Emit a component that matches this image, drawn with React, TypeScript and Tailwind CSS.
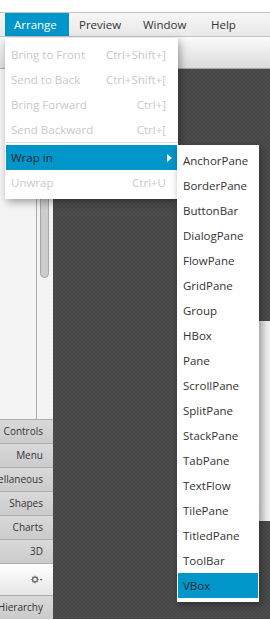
import React from "react";

// Scene Builder style window with the Arrange > Wrap in menu open

const arrangeItems = [
  { label: "Bring to Front", key: "Ctrl+Shift+]" },
  { label: "Send to Back", key: "Ctrl+Shift+[" },
  { label: "Bring Forward", key: "Ctrl+]" },
  { label: "Send Backward", key: "Ctrl+[" },
];

const wrapTargets = [
  "AnchorPane",
  "BorderPane",
  "ButtonBar",
  "DialogPane",
  "FlowPane",
  "GridPane",
  "Group",
  "HBox",
  "Pane",
  "ScrollPane",
  "SplitPane",
  "StackPane",
  "TabPane",
  "TextFlow",
  "TilePane",
  "TitledPane",
  "ToolBar",
  "VBox",
];

const sections = ["Controls", "Menu", "Miscellaneous", "Shapes", "Charts", "3D"];

function MenuBar() {
  return (
    <div className="flex h-[25px] items-stretch border-t border-b border-[#c4c4c4] bg-gradient-to-b from-[#f6f6f6] to-[#e9e9e9] pl-[5px] text-[#333]">
      <div className="flex w-[64px] items-center bg-[#0096c9] pl-[9px] text-white">Arrange</div>
      <div className="flex w-[62px] items-center pl-[10px]">Preview</div>
      <div className="flex w-[68px] items-center pl-[12px]">Window</div>
      <div className="flex items-center pl-[12px]">Help</div>
    </div>
  );
}

function Gear() {
  return (
    <svg width="12" height="9" viewBox="0 0 12 9" fill="none">
      <circle cx="4" cy="4.5" r="2.4" stroke="#6a6a6a" strokeWidth="1.3" />
      <path
        d="M4 0.8v1.2M4 7v1.2M0.3 4.5h1.2M6.5 4.5h1.2M1.4 1.9l.8.8M5.8 6.3l.8.8M1.4 7.1l.8-.8M5.8 2.7l.8-.8"
        stroke="#6a6a6a"
        strokeWidth="1.1"
      />
      <path d="M8.6 4h3l-1.5 1.8z" fill="#6a6a6a" />
    </svg>
  );
}

function SectionHeader({ title }: { title: string }) {
  return (
    <div className="flex h-[24px] shrink-0 items-center justify-end overflow-hidden whitespace-nowrap border-t border-[#adadad] bg-gradient-to-b from-[#d9d9d9] to-[#cbcbcb] pr-[10px] text-[10px] text-[#333]">
      {title}
    </div>
  );
}

function LeftPanel() {
  return (
    <div className="flex w-[53px] shrink-0 flex-col bg-[#f4f4f4]">
      <div className="h-[32px] border-b border-[#a8a8a8] bg-gradient-to-b from-[#f7f7f7] to-[#dedede]" />
      <div className="flex h-[351px]">
        <div className="w-[37px] border-r border-[#a9a9a9]" />
        <div className="w-[16px] pl-[3px] pt-[2px]">
          <div className="h-[207px] w-[9px] rounded-b-[5px] border border-[#a6a6a6] bg-[#cdcdcd]" />
        </div>
      </div>
      {sections.map((s) => (
        <SectionHeader key={s} title={s} />
      ))}
      <div className="flex h-[32px] shrink-0 items-center justify-end border-t border-[#adadad] bg-gradient-to-b from-white to-[#e6e6e6] pr-[10px]">
        <Gear />
      </div>
      <SectionHeader title="Hierarchy" />
    </div>
  );
}

function ArrangeMenu() {
  return (
    <div className="absolute left-[5px] top-[38px] w-[173px] bg-white px-px pt-[4px] pb-[4px] shadow-[2px_3px_8px_rgba(0,0,0,0.35)]">
      {arrangeItems.map((it) => (
        <div key={it.label} className="flex h-[25px] items-center justify-between pl-[5px] pr-[11px] text-[#c9c9c9]">
          <span>{it.label}</span>
          <span>{it.key}</span>
        </div>
      ))}
      <div className="mb-[2px] h-px bg-[#dcdcdc]" />
      <div className="flex h-[25px] items-center justify-between bg-[#0096c9] pl-[5px] pr-[5px] text-[#1b2a31]">
        <span>Wrap in</span>
        <svg width="5" height="8" viewBox="0 0 5 8">
          <path d="M0 0l5 4-5 4z" fill="#fff" />
        </svg>
      </div>
      <div className="flex h-[25px] items-center justify-between pl-[5px] pr-[11px] text-[#c9c9c9]">
        <span>Unwrap</span>
        <span>Ctrl+U</span>
      </div>
    </div>
  );
}

function WrapSubmenu() {
  return (
    <div className="absolute left-[177px] top-[145px] w-[82px] bg-white px-px pt-[3px] pb-[4px] shadow-[2px_3px_8px_rgba(0,0,0,0.35)]">
      {wrapTargets.map((t) => (
        <div
          key={t}
          className={
            t === "VBox"
              ? "flex h-[25px] items-center bg-[#0096c9] pl-[5px] text-[#1b2a31]"
              : "flex h-[25px] items-center pl-[5px] text-[#333]"
          }
        >
          {t}
        </div>
      ))}
    </div>
  );
}

export default function App() {
  return (
    <div className="relative h-[620px] w-[270px] overflow-hidden bg-white font-['Open_Sans','Noto_Sans',sans-serif] text-[11.5px]">
      <div className="h-[12px] bg-white" />
      <MenuBar />
      <div className="flex h-[582px]">
        <LeftPanel />
        <div className="flex flex-1 flex-col">
          <div className="h-[32px] border-b border-[#a0a0a0] bg-gradient-to-b from-[#fbfbfb] to-[#dadada]" />
          <div className="relative flex-1 bg-[#4a4a4a] bg-[repeating-conic-gradient(#4e4e4e_0%_25%,#464646_0%_50%)] bg-[length:4px_4px]">
            <div className="absolute left-[206px] top-[252px] h-[200px] w-[11px] bg-gradient-to-r from-[#dedede] to-[#f1f1f1]" />
          </div>
        </div>
      </div>
      <ArrangeMenu />
      <WrapSubmenu />
    </div>
  );
}
